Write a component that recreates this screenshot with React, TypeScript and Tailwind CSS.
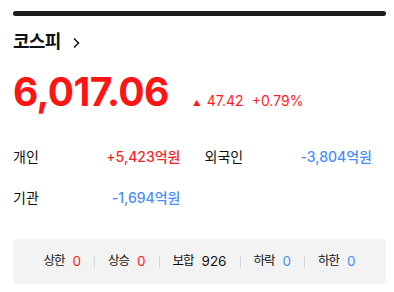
const font = { fontFamily: "Inter, 'Noto Sans CJK KR', sans-serif" };

type Investor = { name: string; value: string; up: boolean };

const investors: Investor[] = [
  { name: "개인", value: "+5,423억원", up: true },
  { name: "외국인", value: "-3,804억원", up: false },
  { name: "기관", value: "-1,694억원", up: false },
];

type Breadth = { label: string; count: string; color: string };

const breadth: Breadth[] = [
  { label: "상한", count: "0", color: "text-[#ff1f1f]" },
  { label: "상승", count: "0", color: "text-[#ff1f1f]" },
  { label: "보합", count: "926", color: "text-[#111]" },
  { label: "하락", count: "0", color: "text-[#4a8dff]" },
  { label: "하한", count: "0", color: "text-[#4a8dff]" },
];

export default function App() {
  return (
    <div className="h-[292px] w-[394px] bg-white px-[13px] pt-[11px] text-[#111]" style={font}>
      <div className="h-[5px] w-[373px] rounded-full bg-[#1c1c1c]" />

      <div className="mt-[14px] flex items-center gap-[11px]">
        <span className="text-[18px] font-bold leading-[24px] tracking-[-0.7px]">코스피</span>
        <svg width="9" height="12" viewBox="0 0 9 12" fill="none" className="mt-[1px]">
          <path d="M2 1.5 L6.5 6 L2 10.5" stroke="#111" strokeWidth="1.5" />
        </svg>
      </div>

      <div className="mt-[15px] flex items-baseline">
        <span className="text-[39px] font-bold leading-[45px] tracking-[-0.6px] text-[#ff1414]">6,017.06</span>
        <span className="ml-[24px] flex items-baseline gap-[6px] text-[14px] text-[#ff1f1f]">
          <span className="text-[8px] leading-none">▲</span>
          <span>47.42</span>
          <span className="ml-[2px]">+0.79%</span>
        </span>
      </div>

      <div className="mt-[33px] grid w-[359px] grid-cols-2 gap-x-6 gap-y-[22px] text-[14px] leading-[19px]">
        {investors.map((inv) => (
          <div key={inv.name} className="flex justify-between">
            <span>{inv.name}</span>
            <span className={`font-medium ${inv.up ? "text-[#ff1f1f]" : "text-[#4a8dff]"}`}>{inv.value}</span>
          </div>
        ))}
      </div>

      <div className="mt-[32px] flex h-[45px] w-[373px] items-center justify-center rounded-[5px] bg-[#f3f3f3] text-[12.5px]">
        {breadth.map((b, i) => (
          <div key={b.label} className="flex items-center">
            {i > 0 && <span className="mx-[13px] h-[12px] w-px bg-[#d8d8d8]" />}
            <span className="tracking-[-1px]">{b.label}</span>
            <span className={`ml-[8px] text-[13.5px] ${b.color}`}>{b.count}</span>
          </div>
        ))}
      </div>
    </div>
  );
}
